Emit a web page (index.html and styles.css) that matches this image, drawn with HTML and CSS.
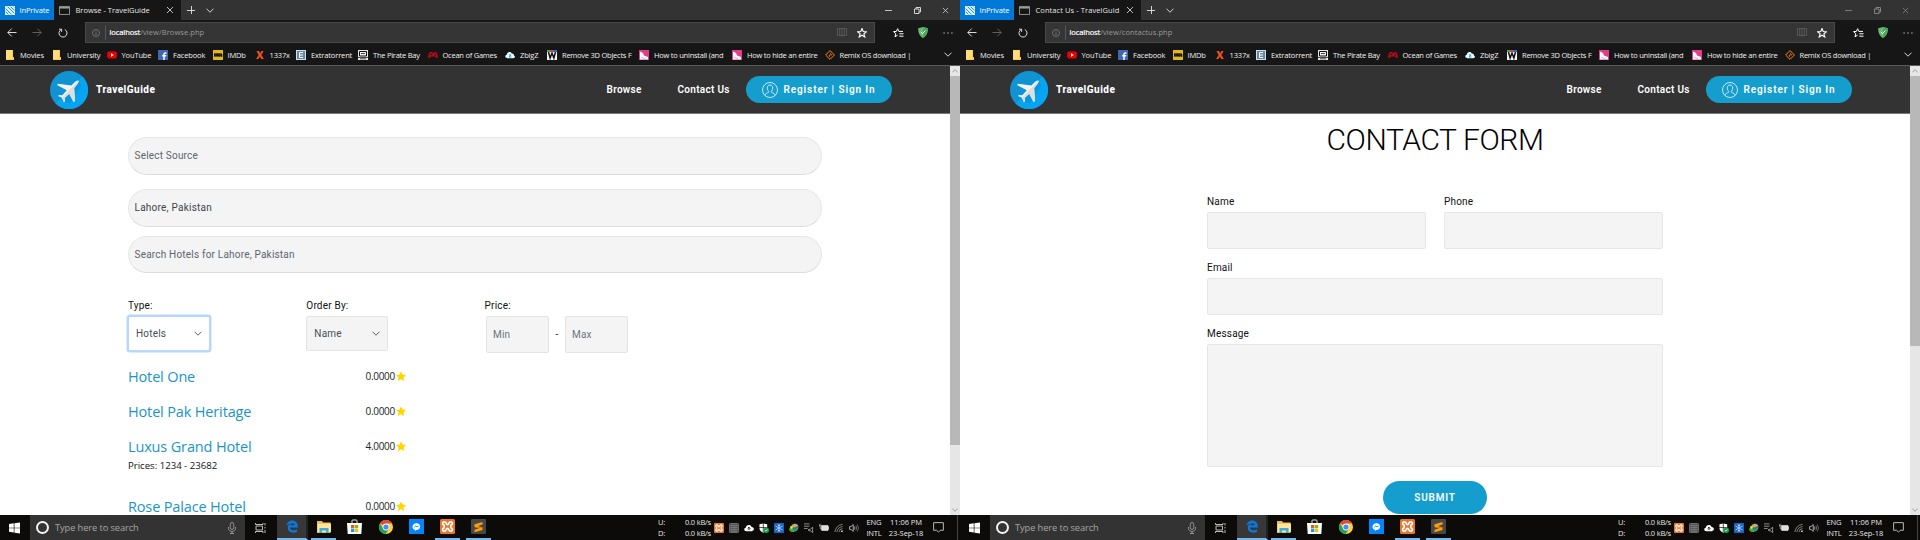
FILE: index.html
```html
<!DOCTYPE html>
<html lang="en">
<head>
<meta charset="utf-8">
<title>TravelGuide</title>
<link rel="stylesheet" href="styles.css">
</head>
<body>
<svg class="sprite" aria-hidden="true">
  <symbol id="private" viewBox="0 0 10 9"><path fill="#d8ecff" d="M0 0h10v9H0z"/><path d="M0 2l7 7M0 5l4 4M2 0l8 8M5 0l5 5M8 0l2 2" stroke="#0078d7" stroke-width=".8"/><path d="M.4.4h9.2v8.2H.4z" fill="none" stroke="#eaf5ff" stroke-width=".7"/></symbol>
  <symbol id="page" viewBox="0 0 11 9"><path d="M.5.5h10v8H.5z" fill="none" stroke="#aaa" stroke-width=".8"/><path d="M.5 1.8h10" stroke="#aaa" stroke-width="1.4"/></symbol>
  <symbol id="x" viewBox="0 0 8 8"><path d="M1 1l6 6M7 1L1 7" stroke="currentColor" stroke-width=".8"/></symbol>
  <symbol id="plus" viewBox="0 0 8 8"><path d="M0 4.500h8M4.500 0v8" stroke="currentColor" stroke-width=".9"/></symbol>
  <symbol id="chev" viewBox="0 0 8 5"><path d="M.5.7L4 4.2 7.5.7" fill="none" stroke="currentColor" stroke-width=".9"/></symbol>
  <symbol id="min" viewBox="0 0 7 7"><path d="M0 3.5h7" stroke="currentColor" stroke-width=".8"/></symbol>
  <symbol id="restore" viewBox="0 0 7 7"><path d="M.5 2h4.500v4.500H.5zM2 2V.5h4.500V5H5" fill="none" stroke="currentColor" stroke-width=".9"/></symbol>
  <symbol id="back" viewBox="0 0 10 9"><path d="M9.500 4.500H.8M4.700.6L.8 4.500l3.900 3.900" fill="none" stroke="currentColor" stroke-width=".9"/></symbol>
  <symbol id="fwd" viewBox="0 0 10 9"><path d="M.5 4.500h8.700M5.300.6l3.900 3.900-3.900 3.900" fill="none" stroke="currentColor" stroke-width=".9"/></symbol>
  <symbol id="reload" viewBox="0 0 10 10"><path d="M3.200 1.500a4 4 0 1 0 3.600 0M1 1.200h2.600v2.600" fill="none" stroke="currentColor" stroke-width=".9"/></symbol>
  <symbol id="info" viewBox="0 0 8 8"><circle cx="4" cy="4" r="3.500" fill="none" stroke="#8a8a8a" stroke-width=".7"/><path d="M4 3.400v2.600M4 1.900v.8" stroke="#8a8a8a" stroke-width=".8"/></symbol>
  <symbol id="book" viewBox="0 0 10 9"><path d="M.5.5h9v7h-9zM5 .5v8M2.700.5v7M7.300.5v7" fill="none" stroke="#606060" stroke-width=".8"/></symbol>
  <symbol id="star" viewBox="0 0 10 10"><path d="M5 .5l1.200 3 3.300.2-2.600 2.100.9 3.200L5 7.200 2.200 9l.9-3.200L.5 3.700l3.300-.2z" fill="none" stroke="#fff" stroke-width="1.100"/></symbol>
  <symbol id="hub" viewBox="0 0 11 10"><path d="M10 3.400H5.800L4.600.7 3.400 3.400.5 3.600l2.300 2L2 8.800l2.600-1.700M6.300 5.800H10.500M6.300 8.200h4.200" fill="none" stroke="#fff" stroke-width="1"/></symbol>
  <symbol id="shield" viewBox="0 0 10 11"><path d="M5 0l4.800 1.300C9.900 6 8.500 9 5 11 1.500 9 .1 6 .2 1.300z" fill="#68bc71"/><path d="M5 0l4.800 1.300C9.900 6 8.500 9 5 11z" fill="#4da85b"/><path d="M2.800 5l1.700 1.700 2.900-3.200" fill="none" stroke="#fff" stroke-width="1"/></symbol>
  <symbol id="dots" viewBox="0 0 10 4"><path d="M.5 2h1.200M4.400 2h1.200M8.300 2h1.200" stroke="#ddd" stroke-width="1.100"/></symbol>
  <symbol id="b-folder" viewBox="0 0 10 10"><path d="M1 0h7v7h1v3H1z" fill="#f7cc54"/><path d="M1 0h6v9H1z" fill="#ffdc75"/></symbol>
  <symbol id="b-youtube" viewBox="0 0 10 10"><rect x=".2" y="1.500" width="9.600" height="7" rx="1.800" fill="#f00000"/><path d="M4 3.300L6.800 5 4 6.700z" fill="#fff"/></symbol>
  <symbol id="b-facebook" viewBox="0 0 10 10"><path d="M0 0h10v10H0z" fill="#4267b2"/><path d="M6 10V4.200Q6 2.700 8.500 3M4.300 5.700h4" stroke="#fff" stroke-width="1.500" fill="none"/></symbol>
  <symbol id="b-imdb" viewBox="0 0 10 10"><path d="M0 0h10v10H0z" fill="#e0b91c"/><path d="M1 3.500h8v3H1z" fill="#4a3d0c"/><path d="M1.500 3.500v3M3 6.500v-3l.8 2 .8-2v3M5.800 3.700v2.600h.8V3.700zM8.200 3.300v3.200H9V4.700h-.8" fill="none" stroke="#111" stroke-width=".8"/></symbol>
  <symbol id="b-x" viewBox="0 0 10 10"><path d="M1.500 1h2.600L5.200 3.300 6.600 1h2L6.400 4.900 8.900 9H6.200L4.800 6.600 3.400 9H1.100l2.500-4.100z" fill="#e8501d"/></symbol>
  <symbol id="b-et" viewBox="0 0 10 10"><path d="M0 0h10v10H0z" fill="#cfdfe9"/><path d="M1 1h8v8H1z" fill="#6589a4"/><path d="M7 2.500H3.500v5H7M3.500 5H7" stroke="#fff" fill="none"/></symbol>
  <symbol id="b-pirate" viewBox="0 0 10 10"><path d="M0 0h10v10H0z" fill="#e8e8e8"/><path d="M1.500 1.500h7v4.500h-7z" fill="#eee" stroke="#111"/><path d="M3 3.500h4M0 7.500h10M2 8.800h6" stroke="#222" stroke-width=".8"/></symbol>
  <symbol id="b-game" viewBox="0 0 10 10"><path d="M2 2h2l.6 1h.8L6 2h2c1.500 1.500 2 4 1.700 6.300C8.400 8.600 7.600 7 6.600 6.500H3.400C2.400 7 1.600 8.600.3 8.300 0 6 .5 3.500 2 2z" fill="#a80f1b"/><path d="M2 4.500h2M3 3.500v2M6.500 4h1M7 5h1" stroke="#300" stroke-width=".7"/></symbol>
  <symbol id="b-cloud" viewBox="0 0 10 10"><path d="M2.300 8.200C-.3 8-.4 5.100 1.800 4.700 1.800 2 5.600 1 6.700 3.400 8.600 3.200 9.300 4.700 8.800 5.500c1.800.5 1.400 2.700-.6 2.700z" fill="#e9f8ff"/><path d="M4 5h2L4 7h2.400" stroke="#1aa7dd" fill="none"/></symbol>
  <symbol id="b-w" viewBox="0 0 10 10"><path d="M0 0h10v10H0z" fill="#f4f4f4"/><path d="M0 0h3v2H0z" fill="#4fa64f"/><path d="M3 0h3v2H3z" fill="#d44"/><path d="M6 0h4v2H6z" fill="#46c"/><path d="M1.500 2l1.600 6L5 3l1.900 5 1.600-6" fill="none" stroke="#111" stroke-width="1.500"/></symbol>
  <symbol id="b-pink" viewBox="0 0 10 10"><path d="M0 0h10v10H0z" fill="#e0408a"/><path d="M1 1.500l3 1.500 1 2.500 4 1.500v2.500H1z" fill="#fff"/><path d="M2 7l4 2" stroke="#f2a1c5"/></symbol>
  <symbol id="b-remix" viewBox="0 0 10 10"><path d="M5 .6L9.400 5 5 9.400.6 5z" fill="#231509" stroke="#f0872b"/><path d="M5.500 2.500v2l-2 1.200L5 7V5.200l2 0z" fill="#f0872b"/></symbol>
  <symbol id="logo" viewBox="0 0 38 38"><circle cx="19" cy="19" r="19" fill="#1093d2"/><path d="M32.500 5.500A19 19 0 0 1 5.500 32.500z" fill="#06a4f1"/><path d="M28 10l4 4-12 18-8-2z" fill="#098dd0" opacity=".55"/><path d="M28.600 9.600c-2-.3-4 1.500-7.300 5L8.200 12.800 7 14l9.800 5.300-4.500 5-3.300-.3-1 1 4 1.800 1.800 4.400 1.200-1-.2-3.500 4.400-4L23.600 31l1.500-1.200-1-12.800c3-3 4.900-5.400 4.500-7.400z" fill="#f3f3f3"/><path d="M28.600 9.600L12 26.800l1.800 4.400 1.200-1-.2-3.500 4.400-4L23.600 31l1.500-1.200-1-12.800c3-3 4.900-5.400 4.500-7.400z" fill="#dedede"/></symbol>
  <symbol id="user" viewBox="0 0 16 16"><circle cx="8" cy="8" r="7.500" fill="none" stroke="#d9f1fa" stroke-width=".9"/><path d="M3 13.300c.3-1.900 1.800-2.300 3.200-2.700.7-.4.6-1 .1-1.600-1.600-2-1.500-6 1.700-6s3.300 4 1.700 6c-.5.6-.6 1.200.1 1.600 1.400.4 2.900.8 3.200 2.700" fill="none" stroke="#d9f1fa" stroke-width=".9"/></symbol>
  <symbol id="rate" viewBox="0 0 10 10"><path d="M5 .2l1.500 3.200 3.500.5-2.500 2.500.6 3.500L5 8.200 1.900 9.900l.6-3.500L0 3.900l3.500-.5z" fill="#ffd700"/></symbol>
  <symbol id="win" viewBox="0 0 12 12"><path d="M0 1.700l5.200-.8v4.700H0zM5.900.8L12 0v5.600H5.900zM0 6.300h5.200V11L0 10.200zM5.900 6.300H12V12l-6.100-.9z" fill="#fff"/></symbol>
  <symbol id="mic" viewBox="0 0 8 12"><rect x="2.300" y=".5" width="3.400" height="7" rx="1.700" fill="none" stroke="#aaa" stroke-width=".8"/><path d="M.5 5v1.500C.5 10.500 7.500 10.500 7.500 6.500V5M4 9.500v2M2 11.500h4" fill="none" stroke="#aaa" stroke-width=".8"/></symbol>
  <symbol id="task" viewBox="0 0 11 10"><path d="M1 3h6.500v4H1zM.5 0v1.500h7.500V0M.5 10V8.500h7.500V10M10 0v2.500M10 4v1.500M10 7v3" fill="none" stroke="#ccc" stroke-width=".9"/></symbol>
  <symbol id="edge" viewBox="0 0 12 12"><path d="M.2 5.600C.8 1.900 3.200 0 6.200 0c3.400 0 5.600 2.500 5.600 5.500v1.400H4.100c.1 3.300 4.400 3.600 7 1.900v2.500C6.600 13.300 1.800 11.700 1.800 7.200c0-2 1-3.400 2.600-4.200C2.800 3.200 1.200 4 .2 5.600zM4.200 4.800h4.400C8.500 1.900 4.700 1.900 4.200 4.800z" fill="#0b79dc"/></symbol>
  <symbol id="files" viewBox="0 0 14 12"><path d="M0 0h5l1 1.500h7.500V12H0z" fill="#e9b94e"/><path d="M.5 2.500H14V11H.5z" fill="#fde59a"/><path d="M2.500 12V7h9v5H9V9.500H5V12z" fill="#3fa9e0"/></symbol>
  <symbol id="store" viewBox="0 0 15 15"><path d="M5 4V1.700Q5 1 5.700 1h3.600q.7 0 .7.700V4" fill="none" stroke="#eee" stroke-width="1"/><path d="M0 4h15l-.7 11H.7z" fill="#fff"/><path d="M4 6h3.300v3.300H4z" fill="#f25022"/><path d="M7.900 6h3.300v3.300H7.900z" fill="#7fba00"/><path d="M4 9.800h3.300v3.300H4z" fill="#00a4ef"/><path d="M7.900 9.800h3.300v3.300H7.900z" fill="#ffb900"/></symbol>
  <symbol id="chrome" viewBox="0 0 14 14"><circle cx="7" cy="7" r="7" fill="#fdd23c"/><path d="M7 7L.9 3.500A7 7 0 0 1 13.100 3.600H7z" fill="#de4a3c"/><path d="M.9 3.500A7 7 0 0 0 6.600 14L10 8.800 7 7 4.200 8.600z" fill="#26a15a"/><circle cx="7" cy="7" r="3.400" fill="#fff"/><circle cx="7" cy="7" r="2.600" fill="#4b8bf4"/></symbol>
  <symbol id="msg" viewBox="0 0 15 15"><path d="M0 0h15v15H0z" fill="#0584ff"/><path d="M7.500 4.200c-5 0-5 5.800-1.600 6.600v1.200l1.400-1c5.100 0 5-6.800.2-6.800z" fill="#fff"/><path d="M5.300 8.300l1.500-1.400 1.100 1 1.700-1" stroke="#0584ff" stroke-width=".9" fill="none"/></symbol>
  <symbol id="xampp" viewBox="0 0 15 15"><rect width="15" height="15" rx="1.500" fill="#ee7427"/><path d="M5.200 3C2.500 2 1.500 5.500 4.200 6.200v2.600C1.500 9.500 2.500 13 5.200 12c1.600-.7.600-2.700 2.300-2.700s.7 2 2.300 2.700c2.700 1 3.700-2.500 1-3.200V6.200C13.500 5.500 12.500 2 9.800 3 8.200 3.700 9.200 5.700 7.500 5.700S6.800 3.700 5.200 3z" fill="none" stroke="#fff" stroke-width="1.700"/></symbol>
  <symbol id="sublime" viewBox="0 0 15 15"><rect width="15" height="15" rx="1" fill="#474747"/><path d="M11.500 3v2.600L7 7l4.500 1.400V11L3.500 13.300v-2.600L8 9.300 3.500 7.900V5.300z" fill="#ff9d0a"/><path d="M3.500 7.900l8 .5L8 9.300z" fill="#c87400"/></symbol>
  <symbol id="t-chip" viewBox="0 0 11 11"><rect x=".5" y=".5" width="10" height="10" rx="1" fill="#555" stroke="#777"/><path d="M2 3h7M2 5h7M2 7h7M2 9h7" stroke="#888" stroke-width=".8"/></symbol>
  <symbol id="t-cloud" viewBox="0 0 11 11"><path d="M2.500 9C-.5 8.700-.2 5.500 2 5.300 2 1.700 7.300 1 8.200 4.400c3.300-.2 3.600 4.300.5 4.600z" fill="#fff"/><path d="M5.500 8V5M4 6.200l1.500-1.500L7 6.200" fill="none" stroke="#111"/></symbol>
  <symbol id="t-def" viewBox="0 0 11 11"><path d="M4.700.5L9 1.500v4C9 8 7.500 9.500 4.700 10.700 2 9.500.5 8 .5 5.500v-4z" fill="#fff"/><path d="M4.700 0v10M0 5h9.500" stroke="#111" stroke-width=".8"/><circle cx="8" cy="8" r="3" fill="#17a34c"/><path d="M6.700 8l1 1 1.600-1.900" fill="none" stroke="#fff" stroke-width=".7"/></symbol>
  <symbol id="t-snow" viewBox="0 0 11 11"><path d="M0 0h11v11H0z" fill="#1561c4"/><path d="M5.500 1v9M1.600 3.300l7.800 4.400M9.400 3.300L1.600 7.700M4 2l1.500 1.200L7 2M4 9l1.500-1.200L7 9" stroke="#bfe3ff" fill="none" stroke-width=".9"/></symbol>
  <symbol id="t-idm" viewBox="0 0 11 11"><circle cx="6.500" cy="4.500" r="4" fill="#1f6fd0"/><path d="M3 3c2-3 6-2 7 0L6 5z" fill="#f5a81c"/><path d="M0 6l3-1 3 3 4-3c0 3-3 5-6 5s-4-2-4-4z" fill="#43b02a"/><path d="M2 3l3 1-2 3-2-2z" fill="#e8e030"/></symbol>
  <symbol id="t-list" viewBox="0 0 11 11"><path d="M0 1h6M0 3.500h6M0 6h4M5 7h2l2.500-2.500v6L7 8.500H5z" fill="none" stroke="#bbb" stroke-width=".8"/></symbol>
  <symbol id="t-bat" viewBox="0 0 11 11"><path d="M3 3h7v5H3z" fill="#ddd" stroke="#eee"/><path d="M0 2.500h3M1 1v3.500M1.500 4v3" stroke="#ccc" stroke-width=".8"/><path d="M10.800 4.500v2" stroke="#eee"/></symbol>
  <symbol id="t-wifi" viewBox="0 0 11 11"><path d="M1 10A9 9 0 0 1 9.500 1.500M3.200 10A6.500 6.500 0 0 1 9.500 4M5.500 10A4 4 0 0 1 9.500 6.300" fill="none" stroke="#aaa" stroke-width=".8"/><path d="M7.500 10A2 2 0 0 1 9.500 8v2z" fill="#ddd"/></symbol>
  <symbol id="t-vol" viewBox="0 0 11 11"><path d="M.5 4h1.700L4.700 1.800v7.400L2.200 7H.5zM6 4q1 1.500 0 3" fill="none" stroke="#ddd" stroke-width=".8"/><path d="M7.500 2.800q2 2.700 0 5.400M9.200 1.700q2.400 3.800 0 7.600" fill="none" stroke="#888" stroke-width=".8"/></symbol>
  <symbol id="note" viewBox="0 0 12 12"><path d="M.7.7h10.600v8.300H8L6 11 4 9H.7z" fill="none" stroke="#ddd" stroke-width=".9"/></symbol>
</svg>
<main class="desktop" id="desktop"></main>

<template id="browse">
  <section class="browse">
    <div class="pill source">Select Source</div>
    <div class="pill city">Lahore, Pakistan</div>
    <div class="pill search">Search Hotels for Lahore, Pakistan</div>
    <div class="filters">
      <div class="filter"><label>Type:</label><div class="select focused"><span>Hotels</span><svg><use href="#chev"/></svg></div></div>
      <div class="filter"><label>Order By:</label><div class="select"><span>Name</span><svg><use href="#chev"/></svg></div></div>
      <div class="filter"><label>Price:</label><div class="range"><div class="num">Min</div><span>-</span><div class="num">Max</div></div></div>
    </div>
    <div class="hotel"><a>Hotel One</a><span>0.0000</span><svg><use href="#rate"/></svg></div>
    <div class="hotel"><a>Hotel Pak Heritage</a><span>0.0000</span><svg><use href="#rate"/></svg></div>
    <div class="hotel"><a>Luxus Grand Hotel</a><span>4.0000</span><svg><use href="#rate"/></svg></div>
    <p class="prices">Prices: 1234 - 23682</p>
    <div class="hotel"><a>Rose Palace Hotel</a><span>0.0000</span><svg><use href="#rate"/></svg></div>
  </section>
</template>

<template id="contact">
  <section class="contact">
    <h1>CONTACT FORM</h1>
    <div class="pair">
      <div><label>Name</label><div class="field"></div></div>
      <div><label>Phone</label><div class="field"></div></div>
    </div>
    <label>Email</label><div class="field"></div>
    <label>Message</label><div class="field area"></div>
    <div class="submit">SUBMIT</div>
  </section>
</template>
<script src="app.js"></script>
</body>
</html>
```
FILE: styles.css
```css
* { box-sizing: border-box; }
body { margin: 0; background: #000; font-family: "Open Sans", "Noto Sans", sans-serif; font-size: 7.5px; overflow: hidden; }
svg { display: block; flex: none; overflow: visible; }
.sprite { position: absolute; width: 0; height: 0; }
.desktop { display: flex; width: 1920px; height: 540px; }
.window { width: 960px; height: 540px; display: flex; flex-direction: column; overflow: hidden; white-space: nowrap; }

/* tab strip */
.tabs { height: 20px; background: #333; display: flex; align-items: center; color: #e6e6e6; }
.inprivate { width: 54px; height: 20px; background: #0078d7; display: flex; align-items: center; padding-left: 5px; gap: 4.500px; color: #fff; letter-spacing: -.12px; }
.inprivate svg { width: 10px; height: 9px; }
.tab { width: 127px; height: 20px; background: #161616; display: flex; align-items: center; padding-left: 5px; }
.tab .ico { width: 11px; height: 9px; margin-right: 5.500px; }
.tab-title { width: 84px; letter-spacing: 0; }
.inactive .tab-title { letter-spacing: .08px; }
.tab .close { width: 8px; height: 8px; margin-left: 6px; }
.tabs > .plus { width: 8px; height: 8px; margin-left: 6px; }
.tabs > .chev { width: 8px; height: 5px; margin-left: 11px; }
.controls { margin-left: auto; display: flex; gap: 21.500px; margin-right: 11px; }
.controls svg { width: 7px; height: 7px; }
.inactive .controls { color: #8a8a8a; }

/* toolbar */
.toolbar { height: 23px; background: #161616; display: flex; align-items: center; padding: 2px 7px 0; color: #eee; }
.toolbar .nav { width: 10px; height: 9px; }
.nav.fwd { margin-left: 15px; color: #666; }
.toolbar .nav.reload { margin-left: 16px; height: 10px; }
.address { width: 310px; height: 21px; background: #353535; border: 1px solid #484848; display: flex; align-items: center; }
.address { width: 790px; margin-left: 17px; padding-left: 6px; color: #999; }
.address .info { width: 8px; height: 8px; margin-right: 5px; }
.url { border-left: 1px solid #555; padding-left: 3.500px; height: 15px; line-height: 15px; letter-spacing: .07px; }
.url b { font-weight: 400; color: #fff; letter-spacing: -.08px; -webkit-text-stroke: .2px #fff; }
.address .book { width: 10px; height: 9px; margin-left: auto; }
.address .star { width: 10px; height: 10px; margin: 0 7px 0 10px; }
.toolbar .hub { width: 11px; height: 10px; margin-left: 17.500px; }
.toolbar .shield { width: 10px; height: 11px; margin-left: 14px; }
.toolbar .dots { width: 10px; height: 4px; margin-left: 15px; }

/* bookmarks */
.bookmarks { height: 22px; background: #161616; color: #f0f0f0; display: grid; align-items: center; padding-left: 5px; padding-top: 1px;
  grid-template-columns: 47px 54.500px 51.500px 54.500px 42px 41.500px 62px 69.500px 77.500px 42px 92px 93px 92.500px 119px 8px; }
.bookmark { display: flex; align-items: center; gap: 5px; letter-spacing: -.14px; }
.bookmark svg { width: 10px; height: 10px; }
.bookmark.long { letter-spacing: -.24px; }
.bookmarks > svg { width: 8px; height: 5px; }

/* viewport */
.viewport { height: 450px; display: flex; background: #fff; border-top: 1px solid #5a5a5a; }
.page { width: 950px; overflow: hidden; font-family: Roboto, "Noto Sans", sans-serif; font-size: 10px; letter-spacing: .2px; color: #111; }
.scroll { width: 10px; background: #e6e6e6; display: flex; flex-direction: column; align-items: center; color: #777; padding: 3px 0; }
.scroll svg { width: 6px; height: 4px; }
.thumb { width: 10px; height: 369px; margin: 3px 0 auto; background: #b8b8b8; }
.inactive .thumb { height: 270px; }
.site-nav { height: 48px; background: #333; border-bottom: 1px solid #777; display: flex; align-items: center; padding-left: 50px; color: #fff; font-weight: 600; }
.site-nav .logo { width: 38px; height: 38px; }
.brand { margin-left: 8px; width: 510.500px; font-weight: 800; letter-spacing: .47px; }
.link { width: 71px; letter-spacing: .3px; }
.link + .link { width: 68.500px; }
.register { width: 146px; height: 27px; border-radius: 14px; background: #159dce; display: flex; align-items: center; padding-left: 16px; gap: 5.500px; letter-spacing: .9px; }
.register svg { width: 16px; height: 16px; }

/* browse */
.browse { padding: 23px 0 0 128px; }
.pill { width: 694px; height: 38px; border: 1px solid #e6e6e6; border-bottom-color: #dcdcdc; border-radius: 19px; background: #f4f4f4; color: #5d656d; display: flex; align-items: center; padding-left: 5.500px; padding-bottom: 1px; }
.pill.city { margin: 14px 0 9px; color: #40464c; letter-spacing: .24px; }
.pill.search { height: 37px; }
.filters { display: flex; margin-top: 26px; height: 59px; }
.filter { width: 178.300px; }
.filter label { display: block; height: 17px; line-height: 13px; }
.select { width: 82px; height: 35px; border: 1px solid #e4e4e4; border-radius: 2px; background: #f4f4f4; display: flex; align-items: center; justify-content: space-between; padding: 0 7px; color: #495057; }
.select svg { width: 8px; height: 5px; }
.select.focused { background: #fff; border-color: #b8d8fb; box-shadow: 0 0 0 1.500px #b8d8fb; }
.range { display: flex; padding-left: 1.400px; align-items: center; color: #6c757d; }
.range > span { width: 16px; text-align: center; color: #222; }
.num { width: 63px; height: 37px; border: 1px solid #e4e4e4; border-radius: 2px; background: #f4f4f4; line-height: 36px; padding-left: 6px; }
.hotel { display: flex; align-items: center; height: 35px; font-family: "Open Sans", "Noto Sans", sans-serif; letter-spacing: -.3px; color: #222; }
.filters + .hotel { margin-top: 1px; }
.hotel a { width: 237.500px; font-size: 14.500px; color: #1b95c8; letter-spacing: -.15px; }
.hotel span { width: 30.500px; padding-bottom: 2px; }
.hotel svg { width: 10px; height: 10px; margin-bottom: 2px; }
.prices { margin: -5px 0 16px; height: 14px; line-height: 14px; font-family: "Open Sans", "Noto Sans", sans-serif; font-size: 9.600px; letter-spacing: 0; }

/* contact */
.contact { width: 456px; margin-left: 247px; }
.contact h1 { margin: 0; padding-top: 6px; height: 80px; line-height: 40px; text-align: center; font-size: 30px; font-weight: 300; letter-spacing: -.4px; color: #000; }
.pair { display: flex; gap: 18px; }
.pair > div { flex: 1; }
.contact label { display: block; height: 18px; line-height: 15px; }
.field { height: 37px; border: 1px solid #e6e6e6; border-radius: 2px; background: #f4f4f4; margin-bottom: 11px; }
.field.area { height: 123px; margin-bottom: 14px; }
.submit { margin: 0 auto; width: 104px; height: 33px; line-height: 33px; text-align: center; border-radius: 17px; background: #159dce; color: #fff; font-weight: 600; letter-spacing: .8px; }

/* taskbar */
.taskbar { height: 25px; background: #0c0b0a; display: flex; align-items: center; padding-left: 9px; color: #e6e6e6; }
.taskbar .win { width: 11px; height: 12px; margin-right: 10px; }
.cortana { width: 215px; height: 25px; background: #333; display: flex; align-items: center; padding: 0 9px 0 6px; color: #a6a6a6; font-size: 9.300px; letter-spacing: -.1px; }
.ring { width: 13px; height: 13px; border: 2px solid #f3f3f3; border-radius: 50%; margin-right: 6px; }
.cortana .mic { width: 8px; height: 12px; margin-left: auto; }
.taskbar .task { width: 11px; height: 10px; margin: 0 14px 0 10px; }
.app { width: 25px; height: 25px; margin-right: 6px; border-bottom: 2px solid transparent; display: flex; align-items: center; justify-content: center; }
.app svg { width: 15px; height: 15px; }
.app.edge { width: 31px; margin: 0 3px 0 -3px; background: #373737; border-right: 2px solid #222; }
.app.edge svg { width: 12px; height: 13px; }
.app.open { border-bottom-color: #76b9ed; }
.app .files { height: 12px; width: 14px; }
.app .chrome { width: 14px; height: 14px; }
.stack { line-height: 11px; }
.net { display: flex; margin-left: 161px; width: 56px; justify-content: space-between; padding-right: 3px; letter-spacing: -.2px; }
.tray { display: flex; gap: 5px; }
.tray svg { width: 10px; height: 10px; }
.lang { margin-left: 6px; width: 18px; letter-spacing: -.15px; text-align: center; }
.clock { width: 47px; margin-left: -.500px; text-align: center; letter-spacing: -.06px; }
.taskbar .note { width: 11px; height: 11px; margin-left: 3.500px; }
.peek { width: 1px; height: 25px; margin-left: auto; margin-right: 2px; background: #444; }
```
FILE: app.js
```js
const icon = (id, cls = id) => `<svg class="${cls}"><use href="#${id}"/></svg>`;

const bookmarks = [
  ['folder', 'Movies'], ['folder', 'University'], ['youtube', 'YouTube'], ['facebook', 'Facebook'],
  ['imdb', 'IMDb'], ['x', '1337x'], ['et', 'Extratorrent'], ['pirate', 'The Pirate Bay'],
  ['game', 'Ocean of Games'], ['cloud', 'ZbigZ'], ['w', 'Remove 3D Objects F'],
  ['pink', 'How to uninstall (and'], ['pink', 'How to hide an entire'], ['remix', 'Remix OS download |'],
];

const apps = [['edge', true], ['files', true], ['store'], ['chrome'], ['msg'], ['xampp', true], ['sublime', true]];
const tray = ['xampp', 't-chip', 't-cloud', 't-def', 't-snow', 't-idm', 't-list', 't-bat', 't-wifi', 't-vol'];

const renderWindow = ({ title, path, page, inactive }) => `
<div class="window ${inactive ? 'inactive' : ''}">
  <div class="tabs">
    <div class="inprivate">${icon('private')}<span>InPrivate</span></div>
    <div class="tab">${icon('page', 'ico')}<span class="tab-title">${title}</span>${icon('x', 'close')}</div>
    ${icon('plus')}${icon('chev')}
    <div class="controls">${icon('min')}${icon('restore')}${icon('x')}</div>
  </div>
  <div class="toolbar">
    ${icon('back', 'nav')}${icon('fwd', 'nav fwd')}${icon('reload', 'nav reload')}
    <div class="address">${icon('info')}<span class="url"><b>localhost</b>${path}</span>${icon('book')}${icon('star')}</div>
    ${icon('hub')}${icon('shield')}${icon('dots')}
  </div>
  <div class="bookmarks">
    ${bookmarks.map(([i, t]) => `<div class="bookmark ${t.length > 13 ? 'long' : ''}">${icon('b-' + i)}<span>${t}</span></div>`).join('')}
    ${icon('chev')}
  </div>
  <div class="viewport">
    <div class="page">
      <nav class="site-nav">
        ${icon('logo')}<span class="brand">TravelGuide</span>
        <span class="link">Browse</span><span class="link">Contact Us</span>
        <span class="register">${icon('user')}<span>Register | Sign In</span></span>
      </nav>
      ${document.getElementById(page).innerHTML}
    </div>
    <div class="scroll">
      <svg><use href="#chev" transform="rotate(180 3 2)"/></svg><div class="thumb"></div><svg><use href="#chev"/></svg>
    </div>
  </div>
  <div class="taskbar">
    ${icon('win')}
    <div class="cortana"><i class="ring"></i><span>Type here to search</span>${icon('mic')}</div>
    ${icon('task')}
    ${apps.map(([i, open]) => `<div class="app ${i === 'edge' ? 'edge' : ''} ${open ? 'open' : ''}">${icon(i, i === 'edge' ? '' : i)}</div>`).join('')}
    <div class="net stack"><div>U:<br>D:</div><div>0.0 kB/s<br>0.0 kB/s</div></div>
    <div class="tray">${tray.map(i => icon(i)).join('')}</div>
    <div class="lang stack">ENG<br>INTL</div>
    <div class="clock stack">11:06 PM<br>23-Sep-18</div>
    ${icon('note')}<i class="peek"></i>
  </div>
</div>`;

document.getElementById('desktop').innerHTML =
  renderWindow({ title: 'Browse - TravelGuide', path: '/view/Browse.php', page: 'browse' }) +
  renderWindow({ title: 'Contact Us - TravelGuid', path: '/view/contactus.php', page: 'contact', inactive: true });
```
